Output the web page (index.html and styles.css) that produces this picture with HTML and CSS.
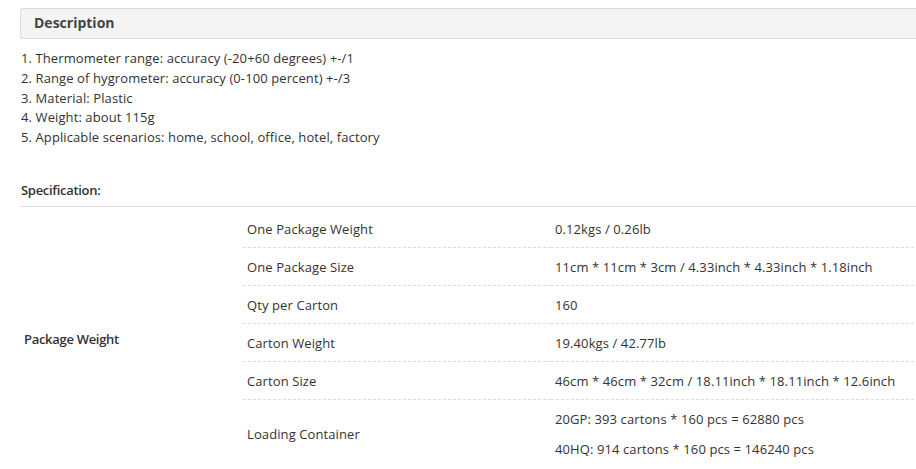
FILE: index.html
```html
<!DOCTYPE html>
<html>
<head>
<meta charset="utf-8">
<link rel="stylesheet" href="styles.css">
</head>
<body>
<div class="page">
  <div class="desc-head"><h2>Description</h2></div>
  <div class="desc-list">
    <div>1. Thermometer range: accuracy (-20+60 degrees) +-/1</div>
    <div>2. Range of hygrometer: accuracy (0-100 percent) +-/3</div>
    <div>3. Material: Plastic</div>
    <div>4. Weight: about 115g</div>
    <div>5. Applicable scenarios: home, school, office, hotel, factory</div>
  </div>
  <h3 class="spec-title">Specification:</h3>
  <table class="spec">
    <colgroup><col class="c1"><col class="c2"><col class="c3"></colgroup>
    <tr>
      <th rowspan="6">Package Weight</th>
      <td>One Package Weight</td><td>0.12kgs / 0.26lb</td>
    </tr>
    <tr><td>One Package Size</td><td>11cm * 11cm * 3cm / 4.33inch * 4.33inch * 1.18inch</td></tr>
    <tr><td>Qty per Carton</td><td>160</td></tr>
    <tr><td>Carton Weight</td><td>19.40kgs / 42.77lb</td></tr>
    <tr><td>Carton Size</td><td>46cm * 46cm * 32cm / 18.11inch * 18.11inch * 12.6inch</td></tr>
    <tr class="last">
      <td>Loading Container</td>
      <td><p>20GP: 393 cartons * 160 pcs = 62880 pcs</p><p>40HQ: 914 cartons * 160 pcs = 146240 pcs</p></td>
    </tr>
  </table>
</div>
</body>
</html>
```
FILE: styles.css
```css
html, body {
  margin: 0;
  padding: 0;
  background: #fff;
  overflow: hidden;
}
body {
  font-family: "Open Sans", "Liberation Sans", sans-serif;
  font-size: 13px;
  color: #333;
  letter-spacing: 0.1px;
}
.page {
  width: 904px;
  padding: 8px 0 0 20px;
}
.desc-head {
  height: 29px;
  border: 1px solid #ddd;
  border-right: none;
  border-radius: 3px 0 0 3px;
  background: #f4f4f4;
  padding-left: 13px;
}
.desc-head h2 {
  margin: 0;
  font-size: 14px;
  font-weight: bold;
  color: #444;
  line-height: 28px;
  letter-spacing: 0;
}
.desc-list {
  margin-top: 10px;
  line-height: 19.8px;
  padding-left: 1px;
}
.spec-title {
  margin: 32px 0 0;
  padding: 0 0 6px 1px;
  font-size: 13px;
  font-weight: 600;
  line-height: 20px;
  color: #333;
  border-bottom: 1px solid #ddd;
  letter-spacing: -0.3px;
}
.spec {
  width: 100%;
  border-collapse: collapse;
  margin-top: 3px;
}
.spec col.c1 { width: 223px; }
.spec col.c2 { width: 308px; }
.spec th {
  text-align: left;
  font-weight: 600;
  padding: 1px 0 0 4px;
  vertical-align: middle;
  line-height: 20px;
  letter-spacing: -0.3px;
}
.spec td {
  padding: 9px 4px 8px;
  line-height: 20px;
  border-bottom: 1px dashed #ddd;
  vertical-align: middle;
}
.spec tr.last td {
  border-bottom: none;
}
.spec p {
  margin: 0;
}
.spec p + p {
  margin-top: 10px;
}
```
